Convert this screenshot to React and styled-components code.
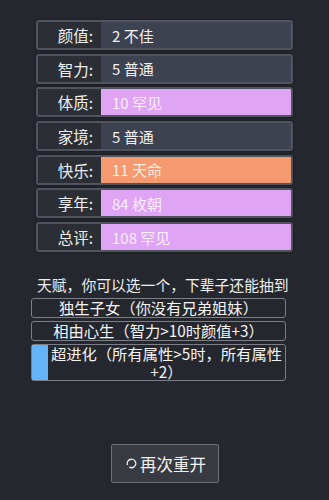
import React from "react";
import styled, { createGlobalStyle } from "styled-components";

const Global = createGlobalStyle`
  html, body { margin: 0; padding: 0; background: #25272e; }
  body { width: 329px; height: 500px; overflow: hidden;
    font-family: "Noto Sans CJK SC", "Noto Sans", sans-serif; color: #f2f2f2; }
`;

const Page = styled.div`
  width: 329px;
  height: 500px;
  background: #25272e;
  box-sizing: border-box;
  padding-top: 20px;
  display: flex;
  flex-direction: column;
`;

const Props = styled.div`
  display: flex;
  flex-direction: column;
  gap: 3.7px;
  margin-left: 36px;
  width: 257px;
`;

const Row = styled.div`
  display: flex;
  height: 30px;
  box-sizing: border-box;
  border: 2px solid #50545e;
  border-radius: 3px;
  overflow: hidden;
  background: #2b2d34;
  box-shadow: 0 0 2px rgba(0,0,0,0.6);
`;

const Label = styled.div`
  width: 63px;
  flex: none;
  background: #2c2e35;
  display: flex;
  align-items: center;
  justify-content: flex-end;
  padding-right: 8px;
  box-sizing: border-box;
  font-size: 15.5px;
  color: #eeeeee;
`;

const Value = styled.div`
  flex: 1;
  display: flex;
  align-items: center;
  padding-left: 11px;
  font-size: 15px;
  background: ${(p) => p.$bg};
  color: ${(p) => p.$fg};
`;

const Talents = styled.div`
  margin-top: 23px;
  margin-left: 31px;
  width: 255px;
  display: flex;
  flex-direction: column;
`;

const TalentTitle = styled.div`
  font-size: 14.8px;
  color: #f0f0f0;
  padding-left: 6px;
  line-height: 20px;
  margin-bottom: 3px;
  white-space: nowrap;
`;

const TalentList = styled.div`
  display: flex;
  flex-direction: column;
  gap: 3px;
`;

const Talent = styled.div`
  position: relative;
  box-sizing: border-box;
  border: 1.5px solid #7c7f88;
  border-radius: 3px;
  min-height: 20px;
  font-size: 15.3px;
  line-height: 17.5px;
  text-align: center;
  color: #f4f4f4;
  padding: 0 2px 0 ${(p) => (p.$selected ? "18px" : "2px")};
  background: #25272e;
`;

const Marker = styled.div`
  position: absolute;
  left: 0;
  top: 0;
  bottom: 0;
  width: 16px;
  background: #62b4f7;
`;

const ButtonWrap = styled.div`
  margin-top: auto;
  margin-bottom: 17px;
  display: flex;
  justify-content: center;
`;

const Button = styled.button`
  width: 108px;
  height: 39px;
  background: #383a42;
  border: 1.5px solid #6d7079;
  border-radius: 2px;
  color: #f2f2f2;
  font-family: "Noto Sans CJK SC", sans-serif;
  font-size: 16.5px;
  display: flex;
  align-items: center;
  justify-content: center;
  gap: 2px;
  padding: 0 0 0 2px;
`;

const rows = [
  ["颜值:", "2 不佳", "#3d4250", "#f2f2f2"],
  ["智力:", "5 普通", "#3d4250", "#f2f2f2"],
  ["体质:", "10 罕见", "#dfa4f4", "#fbeefd"],
  ["家境:", "5 普通", "#3d4250", "#f2f2f2"],
  ["快乐:", "11 天命", "#f59a70", "#fdeee4"],
  ["享年:", "84 枚朝", "#dfa4f4", "#fbeefd"],
  ["总评:", "108 罕见", "#dfa4f4", "#fbeefd"],
];

export default function App() {
  return (
    <>
      <Global />
      <Page>
        <Props>
          {rows.map(([l, v, bg, fg]) => (
            <Row key={l}>
              <Label>{l}</Label>
              <Value $bg={bg} $fg={fg}>{v}</Value>
            </Row>
          ))}
        </Props>
        <Talents>
          <TalentTitle>天赋，你可以选一个，下辈子还能抽到</TalentTitle>
          <TalentList>
            <Talent>独生子女（你没有兄弟姐妹）</Talent>
            <Talent>相由心生（智力&gt;10时颜值+3）</Talent>
            <Talent $selected>
              <Marker />
              超进化（所有属性&gt;5时，所有属性<wbr />+2）
            </Talent>
          </TalentList>
        </Talents>
        <ButtonWrap>
          <Button>
            <svg width="13" height="13" viewBox="0 0 14 14">
              <circle cx="7" cy="7" r="4.6" fill="none" stroke="#f2f2f2" strokeWidth="1.5" strokeDasharray="25 4" transform="rotate(160 7 7)" />
            </svg>
            再次重开
          </Button>
        </ButtonWrap>
      </Page>
    </>
  );
}
